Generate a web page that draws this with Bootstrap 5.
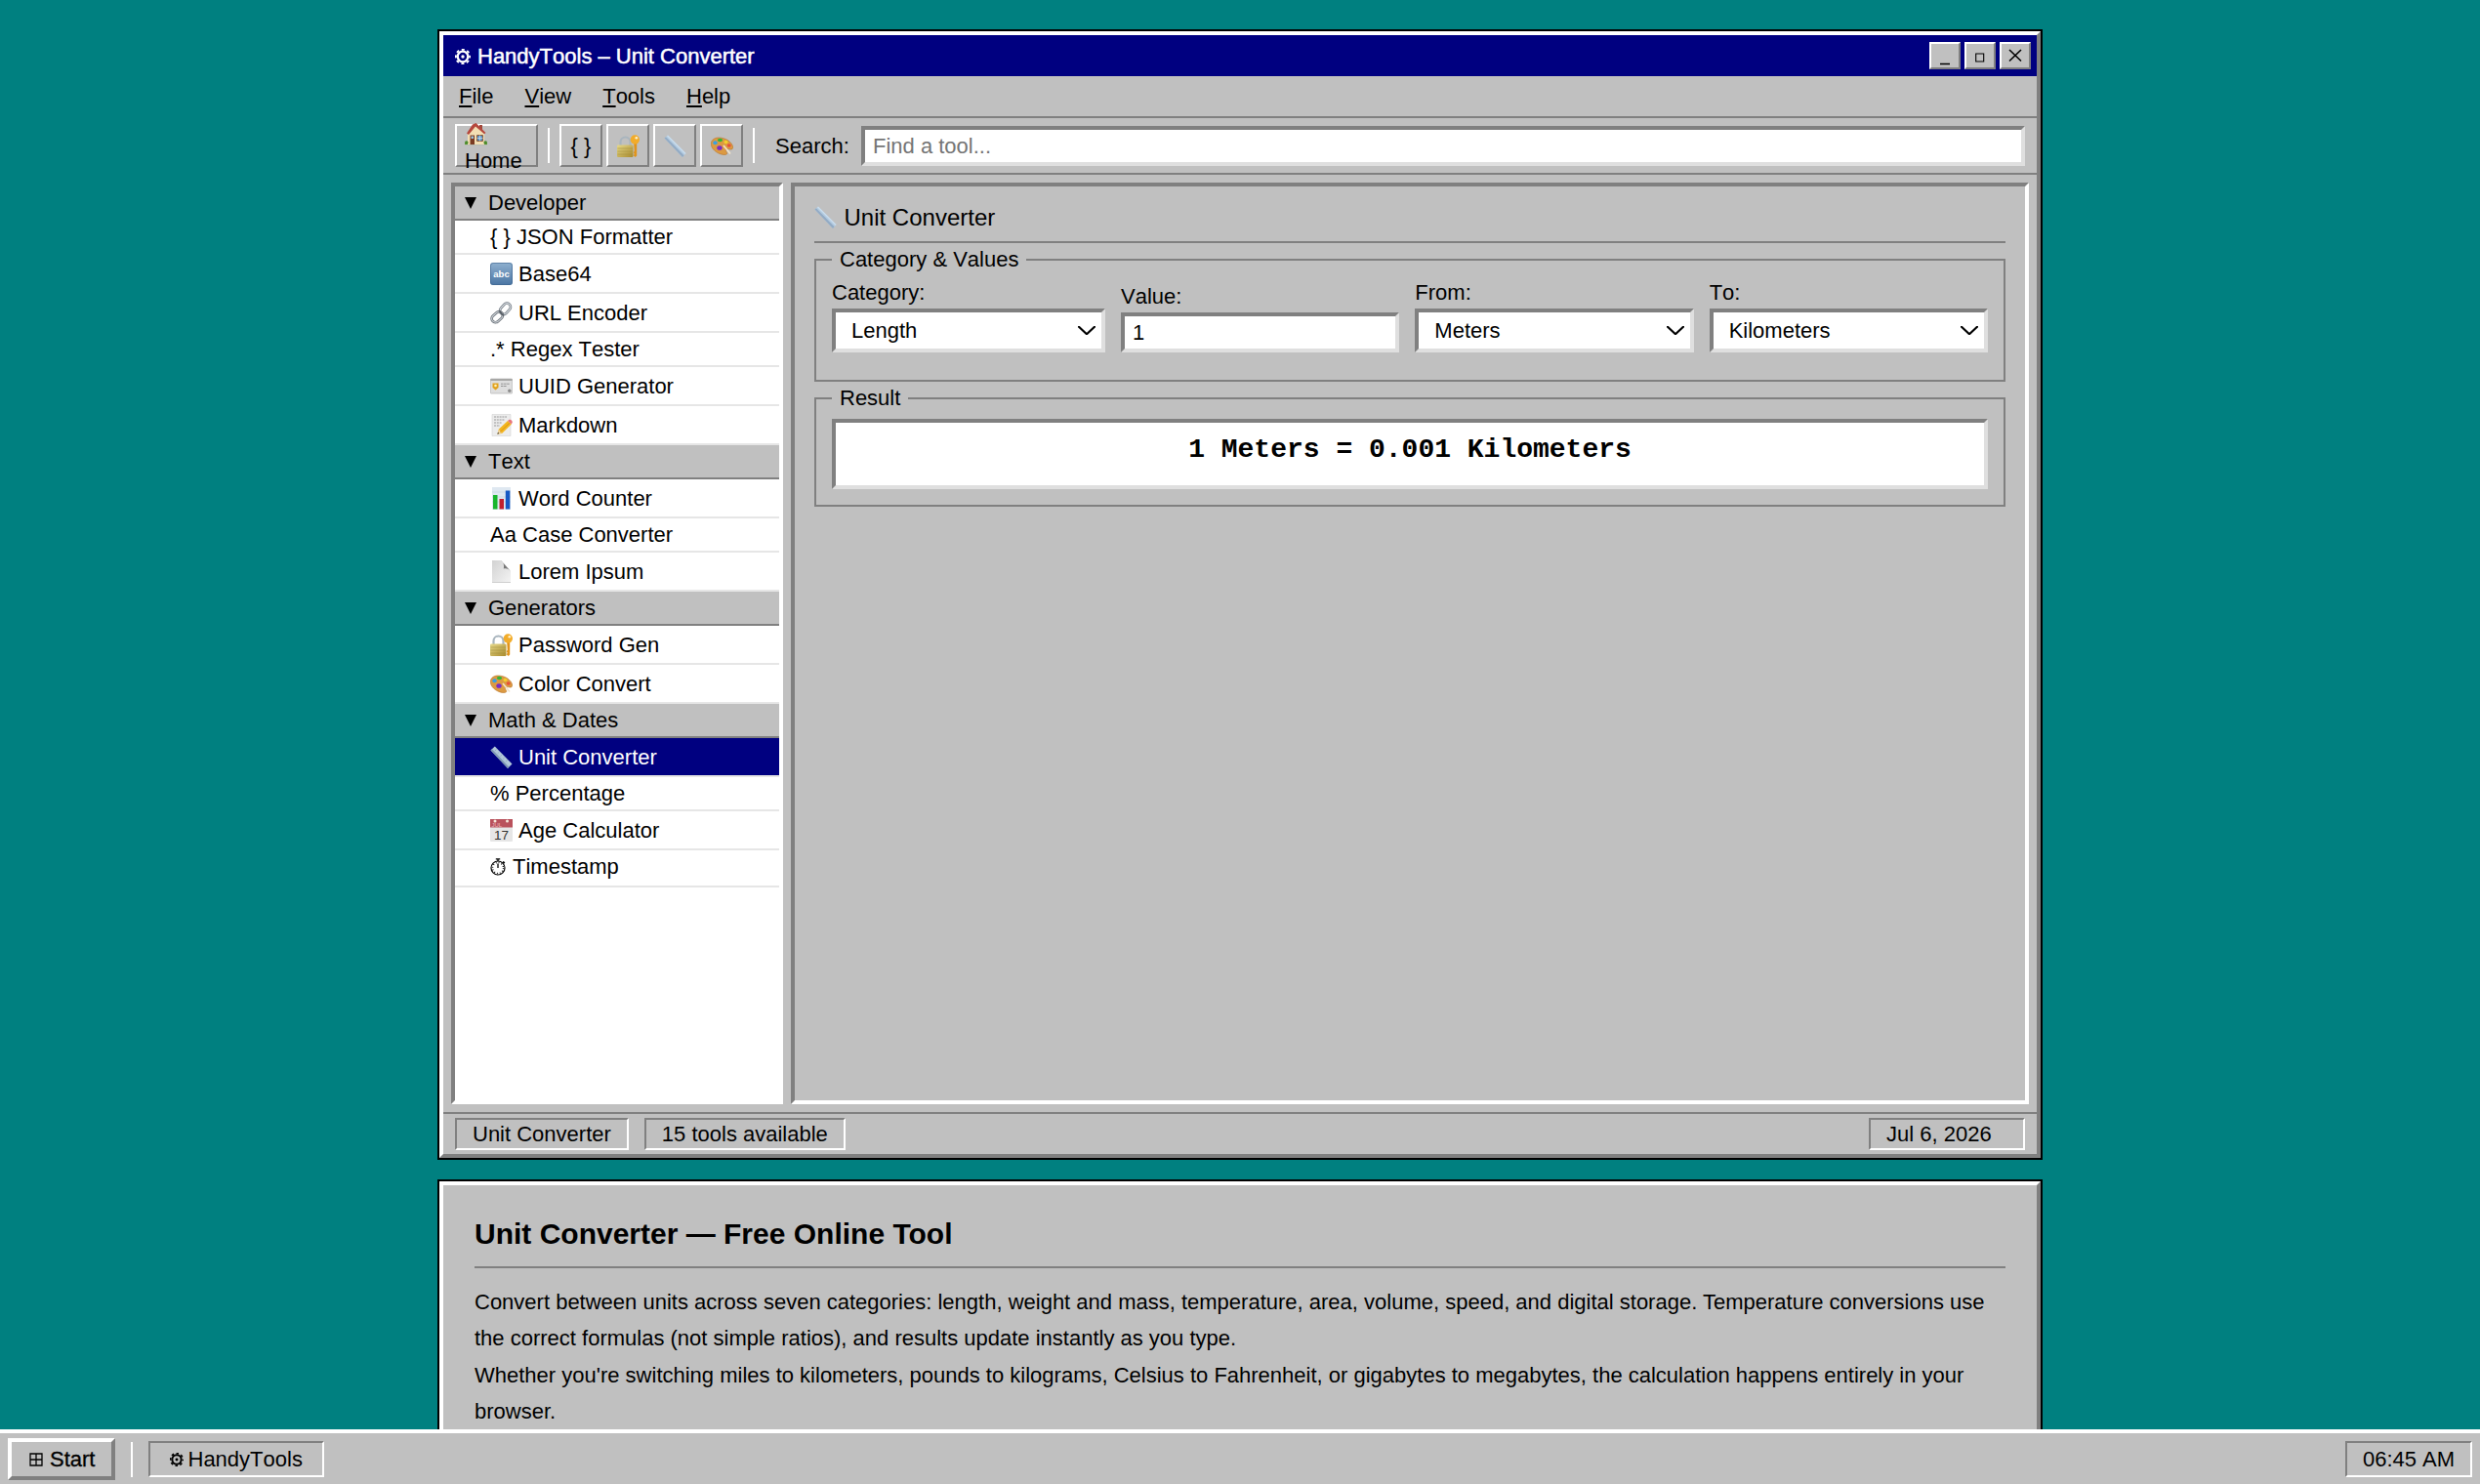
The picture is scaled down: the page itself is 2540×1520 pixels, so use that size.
<!DOCTYPE html>
<html lang="en">
<head>
<meta charset="utf-8">
<title>HandyTools – Unit Converter</title>
<link href="https://cdn.jsdelivr.net/npm/bootstrap@5.3.0/dist/css/bootstrap.min.css" rel="stylesheet">
<style>
:root{--face:#c0c0c0;--shade:#808080;--navy:#000080;--soft:#dfdfdf}
html,body{height:1520px;overflow:hidden}
body{background:#008080;color:#000;font:22px/25px "Liberation Sans",Arial,sans-serif}
svg{display:block;flex:none;overflow:visible}
.desk{padding-top:30px;gap:20px}
.win{width:1644px;border:2px solid #000}
.win-in{border:4px solid;border-color:#fff var(--shade) var(--shade) #fff;background:var(--face)}
.win.main-win{height:1158px}
.main-win,.taskbar{font-kerning:none}
.win.article-win{height:330px}
.title-strip{background:var(--navy);color:#fff;height:42px;padding:0 6px 0 12px;-webkit-text-stroke:.5px #fff}
.ctl{width:32px;height:28px;background:var(--face);border:2px solid;border-color:#fff var(--shade) var(--shade) #fff;color:#000}
.menu-strip{height:43px;padding:0 16px;gap:32px;border-bottom:2px solid var(--shade)}
.menu-strip u{text-decoration-thickness:2px;text-underline-offset:2px}
.tools-strip{height:58px;padding:0 12px;border-bottom:2px solid var(--shade)}
.tb{height:44px;width:44px;border:2px solid;border-color:#fff var(--shade) var(--shade) #fff;margin-right:4px}
.tb-home{width:85px;padding-left:8px;margin-right:10px}
.tb-home svg{margin-top:-3px}
.tb-home span{margin-top:3px}
.vr-line{width:2px;height:36px;background:#fff;flex:none}
.field{border:4px solid;border-color:var(--shade) var(--soft) var(--soft) var(--shade);border-radius:0;background-color:#fff;color:#000;font-size:22px;line-height:25px;padding:0 8px;height:41px}
.field::placeholder{color:#757575;opacity:1}
.find-box{margin-bottom:-1px}
.form-select.field{height:45px;padding:0 40px 0 16px;background-position:right 6px top 14px;background-size:18px 9px;--bs-form-select-bg-img:url("data:image/svg+xml,%3csvg xmlns='http://www.w3.org/2000/svg' viewBox='0 0 18 9'%3e%3cpath d='M1 .8 9 8.2 17 .8' fill='none' stroke='%23000' stroke-width='2.2' stroke-linecap='round' stroke-linejoin='round'/%3e%3c/svg%3e")}
.work{padding:8px;gap:8px;height:960px}
.sunk{border:4px solid;border-color:var(--shade) #fff #fff var(--shade)}
.side{width:340px;background:#fff}
.side-head{height:35px;padding-left:10px;background:var(--face);border-bottom:2px solid var(--shade)}
.side-head svg{margin-right:12px}
.side-item{height:35px;padding-left:36px;border-bottom:2px solid #e6e6e6;white-space:pre}
.side-item.has-ico{height:40px}
.side-item.has-ico svg{margin-right:6px}
.side-item.clock-ico{height:38px;padding-bottom:3px}
.side-item.on{background:var(--navy);color:#fff}
.pane{padding:0 20px}
.pane-head{height:58px;padding-top:8px;border-bottom:2px solid var(--shade);font-size:24px;line-height:28px}
.group{border:2px solid var(--shade);padding:0 16px;margin-top:16px}
.group-cap{height:25px;margin-top:-14px;padding:0 8px;background:var(--face);align-self:flex-start}
.g1{height:126px}
.g2{height:112px}
.result{height:72px;margin-top:9px;background:#fff;border:4px solid;border-color:var(--shade) var(--soft) var(--soft) var(--shade);font:bold 28px/32px "Liberation Mono","Courier New",monospace;padding-top:12px}
.cols{gap:16px;height:83px}
.c-first{width:280px;flex:none}
.status{border-top:2px solid var(--shade);height:43px;padding:4px 12px;gap:16px}
.cell{height:33px;border:2px solid;border-color:var(--shade) #fff #fff var(--shade);padding:0 16px}
.article-pad{padding:0 32px}
.article-h{font-size:30px;line-height:34px;height:85px;padding-top:33px;border-bottom:2px solid var(--shade);margin:0 0 16px;font-weight:bold}
.article-pad p{line-height:37.4px;margin:0}
.taskbar{height:56px;background:var(--face);border-top:4px solid #fff;padding:1px 8px 0}
.start{width:110px;height:43px;border:4px solid;border-color:#fff var(--shade) var(--shade) #fff;-webkit-text-stroke:.3px #000}
.task{height:37px;border:2px solid;border-color:var(--shade) #fff #fff var(--shade)}
.tray{width:130px}
</style>
<script src="https://cdn.jsdelivr.net/npm/bootstrap@5.3.0/dist/js/bootstrap.bundle.min.js"></script>
</head>
<body>
<svg width="0" height="0" class="position-absolute" aria-hidden="true">
<defs>
<linearGradient id="gBlue" x1="0" y1="0" x2="0" y2="1"><stop offset="0" stop-color="#8fb0cf"/><stop offset="1" stop-color="#4a75a3"/></linearGradient>
<linearGradient id="gGold" x1="0" y1="0" x2="1" y2="1"><stop offset="0" stop-color="#e6d98a"/><stop offset="1" stop-color="#a98a2c"/></linearGradient>
<linearGradient id="gRule" x1="0" y1="1" x2="1" y2="0"><stop offset="0" stop-color="#8fa9bf"/><stop offset="1" stop-color="#cfe2f2"/></linearGradient>
<linearGradient id="gPage" x1="0" y1="0" x2="1" y2="1"><stop offset="0" stop-color="#d2d2d2"/><stop offset="1" stop-color="#f4f4f4"/></linearGradient>
<symbol id="i-gear" viewBox="0 0 16 16"><g fill="none" stroke="currentColor"><circle cx="8" cy="8" r="5.300" stroke-width="2.300"/><circle cx="8" cy="8" r="7.200" stroke-width="2" stroke-dasharray="2.900 2.755" stroke-dashoffset="1.450"/></g><circle cx="8" cy="8" r="1.700" fill="currentColor"/></symbol>
<symbol id="i-tri" viewBox="0 0 12 12"><path d="M0 0H12L6 12Z"/></symbol>
<symbol id="i-home" viewBox="0 0 23 23"><path d="M0 20.500h23v1.600H0z" fill="#5f9a35"/><path d="M3 10 11 3l9 7v12H3z" fill="#f3dfb4"/><path d="M15 2h3v5h-3z" fill="#a2483a"/><path d="M11.500 0 21.500 10 20 11.200 11 3.500 4 12 2 10.500 8 1.500z" fill="#b5473c"/><path d="M5.500 12.500h4.500V22H5.500z" fill="#7a3b22"/><path d="M6.500 13.500h2.500v2.500H6.500z" fill="#9cc5e0"/><path d="M12.500 12.500h6v6h-6z" fill="#5b93c4" stroke="#8a5a3a"/><path d="M15.500 12.500v6M12.500 15.500h6" stroke="#dceaf5" stroke-width=".7"/><circle cx="1.800" cy="20" r="1.800" fill="#4c8b2b"/><circle cx="21.200" cy="20" r="1.800" fill="#4c8b2b"/></symbol>
<symbol id="i-lock" viewBox="0 0 23 23"><path d="M3.500 12V7.500a5 5 0 0 1 10 0V12" fill="none" stroke="#a9b5be" stroke-width="2.200"/><path d="M17.200 9h3v12.500l-1.500 1.500-2-1.800 1-1.500-1-1.500 1-1.500z" fill="#e0941c"/><circle cx="18.300" cy="5" r="4.700" fill="#f2ac2a"/><circle cx="19.800" cy="3.300" r="1.300" fill="#fff2cf"/><rect x="0" y="10.500" width="16.500" height="12.500" rx="1.200" fill="url(#gGold)"/><path d="M.5 14h15.500M.5 17h15.500M.5 20h15.500" stroke="#9b8a3a" stroke-width=".7" opacity=".7"/></symbol>
<symbol id="i-rule" viewBox="0 0 23 23"><path d="M.5 4.500 4.800.5 22.500 18.500 18 23Z" fill="url(#gRule)"/><path d="M.5 4.500 18 23l1.300-1.200L1.900 3.200z" fill="#7d97b3"/><path d="m6.500 3.500-1.600 1.500M9.200 6.300 7.600 7.800M12 9.100l-1.600 1.500M14.700 11.900l-1.600 1.500M17.500 14.700l-1.600 1.500" stroke="#88a0b8" stroke-width=".7"/></symbol>
<symbol id="i-ruleg" viewBox="0 0 23 23"><path d="M.5 3.500 4 .5 22.500 19l-3.500 4Z" fill="#b3cbe0"/><path d="M.5 3.500 19 23l1.600-1.800L2 2.300z" fill="#93abc4"/><path d="M4 .5 22.500 19l-.8.900L3.100 1.300z" fill="#cbdeed"/></symbol>
<symbol id="i-pal" viewBox="0 0 23 23"><path d="M8 3C3 3-.3 6.300.4 10.500 1.300 16 8.500 20.500 14 20.500c3.500 0 3-1.800 2-3-1.500-2 .5-3.500 3-2.700 2.500.9 4.300-.3 3.500-3C21 7 15 3 8 3z" fill="#dc9a42" stroke="#b8742a" stroke-width=".6"/><ellipse cx="9.500" cy="5.500" rx="2.600" ry="1.700" fill="#35b437"/><ellipse cx="4.500" cy="8.300" rx="2.200" ry="2" fill="#3aa0e0"/><ellipse cx="9" cy="13.500" rx="2.700" ry="2.300" fill="#7a2cc4"/><ellipse cx="15.500" cy="7.500" rx="2" ry="1.700" fill="#f3cf2c"/><ellipse cx="18.700" cy="11" rx="2" ry="1.700" fill="#e8503a"/><path d="m13 11 7 8.500" stroke="#f2e3c8" stroke-width="1.700"/></symbol>
<symbol id="i-abc" viewBox="0 0 23 23"><rect width="23" height="23" rx="3" fill="url(#gBlue)"/><rect x=".5" y=".5" width="22" height="22" rx="2.600" fill="none" stroke="#3f668f" stroke-opacity=".6"/><text x="11.500" y="14.500" text-anchor="middle" font-family="Liberation Sans,sans-serif" font-weight="bold" font-size="9.500" fill="#fff">abc</text></symbol>
<symbol id="i-link" viewBox="0 0 23 23"><g fill="none" stroke-linecap="round"><rect x="-6.300" y="-3.800" width="12.600" height="7.600" rx="3.800" transform="translate(15.500 7.300) rotate(-48)" stroke="#6f7780" stroke-width="2.600"/><rect x="-6.300" y="-3.800" width="12.600" height="7.600" rx="3.800" transform="translate(15.500 7.300) rotate(-48)" stroke="#d4d9dd" stroke-width="1.200"/><rect x="-6.300" y="-3.800" width="12.600" height="7.600" rx="3.800" transform="translate(7.300 15.700) rotate(-42)" stroke="#5f666e" stroke-width="2.600"/><rect x="-6.300" y="-3.800" width="12.600" height="7.600" rx="3.800" transform="translate(7.300 15.700) rotate(-42)" stroke="#c9ced3" stroke-width="1.200"/><path d="M9.500 9.500 13.500 14" stroke="#555c63" stroke-width="1.600"/></g></symbol>
<symbol id="i-id" viewBox="0 0 23 23"><rect x=".4" y="4" width="22.200" height="15" rx=".8" fill="#dedede" stroke="#b5b5b5" stroke-width=".7"/><path d="M.4 4h22.200v2H.4z" fill="#a8a8a6"/><path d="M2.500 8.500h6V13l-3 2.500-3-2.500z" fill="#e2a21d"/><circle cx="5.500" cy="11" r="1.300" fill="#fff0b8"/><path d="M11 9.200h9M11 11.500h6" stroke="#8b8b8b" stroke-width=".9" stroke-dasharray="2.500 .6"/><circle cx="19.800" cy="16.200" r="1.700" fill="#8c8c8c"/></symbol>
<symbol id="i-memo" viewBox="0 0 23 23"><path d="M2 .5h19v22H2z" fill="#ececec" stroke="#d3d3d3" stroke-width=".6"/><path d="M4 3h13M4 6h11M4 9h8M4 12h6" stroke="#8f8f8f" stroke-width=".9" stroke-dasharray="2 .8"/><path d="M7.500 20.500 9 15.500 18 7l3.800 3.500L12 20z" fill="#f3b51f"/><path d="m18 7 1.500-1.200c1.500-.8 3.800 1.400 3.200 3l-1 1.700z" fill="#e8757c"/><path d="M7.500 20.500 9 16l3 3.500z" fill="#ecd2a2"/><path d="m7.300 20.800.7-2 1.300 1.300z" fill="#333"/><path d="M10 18.500 20 9.200" stroke="#d68f12" stroke-width=".8"/></symbol>
<symbol id="i-chart" viewBox="0 0 23 23"><path d="M2 0h19v23H2z" fill="#dfe8f1"/><path d="M2 5h19M2 10h19M2 15h19" stroke="#c5d2df" stroke-width=".6"/><path d="M3 8h4.500v14.500H3z" fill="#18b52c"/><path d="M9.500 12h4.500v10.500H9.500z" fill="#c01f2e"/><path d="M15.800 3.500h4.500v19h-4.500z" fill="#1658c4"/></symbol>
<symbol id="i-page" viewBox="0 0 23 23"><path d="M2 0h9.500L21 10.500V23H2z" fill="url(#gPage)"/><path d="M11 0c3 2.500 3.500 5 2.800 8.500 3-.8 5 0 7.200 2.800z" fill="#777"/><path d="M2 22.500h19" stroke="#cfcfcf"/></symbol>
<symbol id="i-cal" viewBox="0 0 23 23"><rect width="23" height="23" rx="1" fill="#e6e6e6"/><path d="M0 0h23v8.500H0z" fill="#b9525c"/><circle cx="5" cy="2" r="1.500" fill="#f4e6d8"/><circle cx="17.500" cy="2" r="1.500" fill="#f4e6d8"/><text x="1.500" y="7.800" font-family="Liberation Sans,sans-serif" font-size="6" fill="#e9b6ba">JUL</text><text x="11.500" y="20.500" text-anchor="middle" font-family="Liberation Sans,sans-serif" font-size="13.500" fill="#333">17</text></symbol>
<symbol id="i-watch" viewBox="0 0 16 18"><g fill="none" stroke="#000"><circle cx="8" cy="10" r="7" stroke-width="1.200"/><circle cx="8" cy="10" r="5.500" stroke-width="1.400" stroke-dasharray=".8 2.080"/><path d="M8 10V5.500M8 3V1M5.800.9h4.400" stroke-width="1.300"/><path d="m13 3.600 1.800 1.400" stroke-width="1.600"/></g></symbol>
</defs>
</svg>

<div class="d-flex flex-column vh-100">
<main class="desk d-flex flex-column align-items-center flex-grow-1 overflow-hidden">
  <section class="win main-win flex-shrink-0"><div class="win-in h-100">
    <header class="title-strip d-flex align-items-center">
      <svg width="16" height="16" style="margin:2px 7px 0 0"><use href="#i-gear"/></svg>
      <span class="me-auto">HandyTools – Unit Converter</span>
      <div class="d-flex gap-1">
        <div class="ctl"><svg width="28" height="24"><path d="M9 20.500h10" stroke="#000" stroke-width="1.500"/></svg></div>
        <div class="ctl"><svg width="28" height="24"><path d="M9.700 10h8v8h-8z" fill="none" stroke="#000" stroke-width="1.100"/></svg></div>
        <div class="ctl"><svg width="28" height="24"><path d="m8 6 12 11.500M20 6 8 17.500" stroke="#000" stroke-width="1.600"/></svg></div>
      </div>
    </header>
    <nav class="menu-strip d-flex align-items-center">
      <span><u>F</u>ile</span><span><u>V</u>iew</span><span><u>T</u>ools</span><span><u>H</u>elp</span>
    </nav>
    <div class="tools-strip d-flex align-items-center">
      <div class="tb tb-home d-flex flex-column flex-shrink-0"><svg width="23" height="23"><use href="#i-home"/></svg><span>Home</span></div>
      <div class="vr-line" style="margin-right:10px"></div>
      <div class="tb d-flex align-items-center justify-content-center">{ }</div>
      <div class="tb d-flex align-items-center justify-content-center"><svg width="23" height="23"><use href="#i-lock"/></svg></div>
      <div class="tb d-flex align-items-center justify-content-center"><svg width="23" height="23"><use href="#i-ruleg"/></svg></div>
      <div class="tb d-flex align-items-center justify-content-center me-2"><svg width="23" height="23"><use href="#i-pal"/></svg></div>
      <div class="vr-line" style="margin:0 21px 0 2px"></div>
      <label for="find" style="width:88px">Search:</label>
      <input id="find" class="form-control field find-box flex-grow-1 w-auto" placeholder="Find a tool...">
    </div>
    <div class="work d-flex">
      <aside class="side sunk flex-shrink-0">
        <div class="side-head d-flex align-items-center"><svg width="12" height="12"><use href="#i-tri"/></svg>Developer</div>
        <div class="side-item d-flex align-items-center">{ } JSON Formatter</div>
        <div class="side-item has-ico d-flex align-items-center"><svg width="23" height="23"><use href="#i-abc"/></svg>Base64</div>
        <div class="side-item has-ico d-flex align-items-center"><svg width="23" height="23"><use href="#i-link"/></svg>URL Encoder</div>
        <div class="side-item d-flex align-items-center">.* Regex Tester</div>
        <div class="side-item has-ico d-flex align-items-center"><svg width="23" height="23"><use href="#i-id"/></svg>UUID Generator</div>
        <div class="side-item has-ico d-flex align-items-center"><svg width="23" height="23"><use href="#i-memo"/></svg>Markdown</div>
        <div class="side-head d-flex align-items-center"><svg width="12" height="12"><use href="#i-tri"/></svg>Text</div>
        <div class="side-item has-ico d-flex align-items-center"><svg width="23" height="23"><use href="#i-chart"/></svg>Word Counter</div>
        <div class="side-item d-flex align-items-center">Aa Case Converter</div>
        <div class="side-item has-ico d-flex align-items-center"><svg width="23" height="23"><use href="#i-page"/></svg>Lorem Ipsum</div>
        <div class="side-head d-flex align-items-center"><svg width="12" height="12"><use href="#i-tri"/></svg>Generators</div>
        <div class="side-item has-ico d-flex align-items-center"><svg width="23" height="23"><use href="#i-lock"/></svg>Password Gen</div>
        <div class="side-item has-ico d-flex align-items-center"><svg width="23" height="23"><use href="#i-pal"/></svg>Color Convert</div>
        <div class="side-head d-flex align-items-center"><svg width="12" height="12"><use href="#i-tri"/></svg>Math &amp; Dates</div>
        <div class="side-item has-ico on d-flex align-items-center"><svg width="23" height="23"><use href="#i-rule"/></svg>Unit Converter</div>
        <div class="side-item d-flex align-items-center">% Percentage</div>
        <div class="side-item has-ico d-flex align-items-center"><svg width="23" height="23"><use href="#i-cal"/></svg>Age Calculator</div>
        <div class="side-item clock-ico d-flex align-items-center"><svg width="16" height="18" style="margin-right:7px"><use href="#i-watch"/></svg>Timestamp</div>
      </aside>
      <section class="pane sunk flex-grow-1">
        <div class="pane-head d-flex align-items-center"><svg width="23" height="23" style="margin:0 7.500px 2px 0"><use href="#i-ruleg"/></svg>Unit Converter</div>
        <div class="group g1 d-flex flex-column">
          <div class="group-cap">Category &amp; Values</div>
          <div class="cols d-flex align-items-end">
            <div class="c-first"><label class="d-block pb-1">Category:</label><select class="form-select field"><option>Length</option></select></div>
            <div class="flex-fill w-100"><label class="d-block pb-1">Value:</label><input class="form-control field" value="1"></div>
            <div class="flex-fill w-100"><label class="d-block pb-1">From:</label><select class="form-select field"><option>Meters</option></select></div>
            <div class="flex-fill w-100"><label class="d-block pb-1">To:</label><select class="form-select field"><option>Kilometers</option></select></div>
          </div>
        </div>
        <div class="group g2 d-flex flex-column">
          <div class="group-cap">Result</div>
          <div class="result text-center">1 Meters = 0.001 Kilometers</div>
        </div>
      </section>
    </div>
    <footer class="status d-flex">
      <div class="cell d-flex align-items-center">Unit Converter</div>
      <div class="cell d-flex align-items-center">15 tools available</div>
      <div class="cell d-flex align-items-center ms-auto" style="width:160px">Jul 6, 2026</div>
    </footer>
  </div></section>

  <section class="win article-win flex-shrink-0"><div class="win-in h-100 article-pad">
    <h1 class="article-h">Unit Converter — Free Online Tool</h1>
    <p>Convert between units across seven categories: length, weight and mass, temperature, area, volume, speed, and digital storage. Temperature conversions use the correct formulas (not simple ratios), and results update instantly as you type.</p>
    <p>Whether you're switching miles to kilometers, pounds to kilograms, Celsius to Fahrenheit, or gigabytes to megabytes, the calculation happens entirely in your browser.</p>
  </div></section>
</main>

<footer class="taskbar d-flex align-items-center flex-shrink-0">
  <div class="start d-flex align-items-center"><svg width="14" height="14" style="margin:1px 7.500px 0 17.500px" fill="none" stroke="#000" stroke-width="1.300"><path d="M1 1h12v12H1zM7 1v12M1 7h12"/></svg>Start</div>
  <div class="vr-line mx-3"></div>
  <div class="task d-flex align-items-center" style="width:180px"><svg width="14" height="14" style="margin:1px 5px 0 19.500px"><use href="#i-gear"/></svg>HandyTools</div>
  <div class="task tray d-flex align-items-center justify-content-center ms-auto">06:45 AM</div>
</footer>
</div>
</body>
</html>
